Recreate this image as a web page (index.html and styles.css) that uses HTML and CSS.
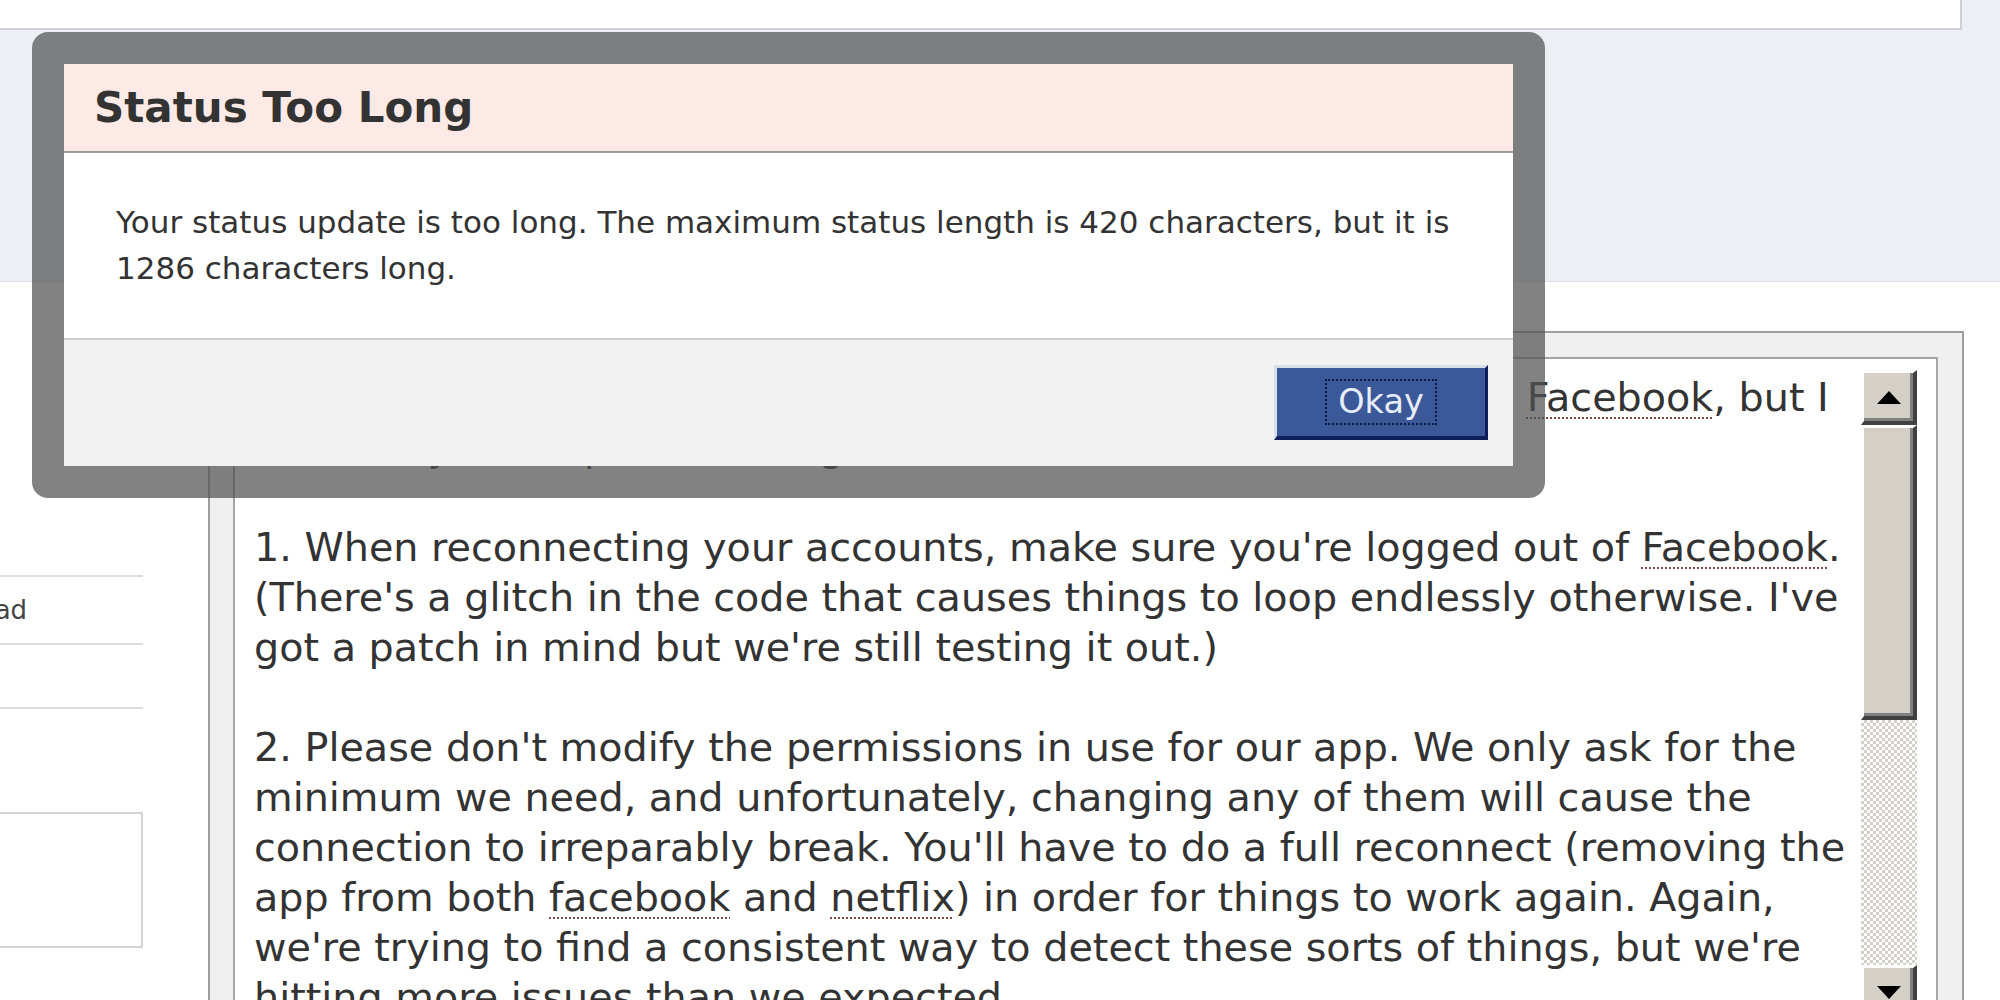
FILE: index.html
```html
<!DOCTYPE html>
<html lang="en">
<head>
    <meta charset="UTF-8">
    <title>Status Too Long</title>
    <link rel="stylesheet" href="styles.css">
</head>
<body>
    <div class="top">
        <div class="topbox"></div>
    </div>

    <div class="content">
        <div class="sidebar">
            <div class="side-item first"><span class="side-text">Upload</span></div>
            <div class="side-item second"></div>
            <div class="side-box"></div>
        </div>

        <div class="composer">
            <div class="textbox">
                <div class="text">
                    Hey, thanks a lot for using the Netflix app! We all really do love <u>Facebook</u>, but I<br>
                    ask that you keep a few things in mind while we work on it:<br>
                    <br>
                    1. When reconnecting your accounts, make sure you're logged out of <u>Facebook</u>.<br>
                    (There's a glitch in the code that causes things to loop endlessly otherwise. I've<br>
                    got a patch in mind but we're still testing it out.)<br>
                    <br>
                    2. Please don't modify the permissions in use for our app. We only ask for the<br>
                    minimum we need, and unfortunately, changing any of them will cause the<br>
                    connection to irreparably break. You'll have to do a full reconnect (removing the<br>
                    app from both <u>facebook</u> and <u>netflix</u>) in order for things to work again. Again,<br>
                    we're trying to find a consistent way to detect these sorts of things, but we're<br>
                    hitting more issues than we expected.
                </div>
                <div class="scrollbar">
                    <div class="sb-btn"><span class="arrow-up"></span></div>
                    <div class="sb-thumb"></div>
                    <div class="sb-track"></div>
                    <div class="sb-btn"><span class="arrow-down"></span></div>
                </div>
            </div>
        </div>
    </div>

    <!-- error dialog over the page -->
    <div class="dialog">
        <div class="dialog-box">
            <div class="dialog-title">Status Too Long</div>
            <div class="dialog-body">
                Your status update is too long. The maximum status length is 420 characters, but it is<br>
                1286 characters long.
            </div>
            <div class="dialog-footer">
                <button class="btn"><span>Okay</span></button>
            </div>
        </div>
    </div>
</body>
</html>
```

FILE: styles.css
```css
body {
    margin: 0;
    background-color: #fff;
    font-family: "DejaVu Sans", Tahoma, sans-serif;
    color: #333;
    overflow: hidden;
}
.top {
    height: 281px;
    background-color: #edeff4;
    border-bottom: 1px solid #dfe2ea;
}
.topbox {
    width: 1960px;
    height: 28px;
    background-color: #fff;
    border-right: 2px solid #cdd0d6;
    border-bottom: 2px solid #cdd0d6;
}
.content {
    display: flex;
    align-items: flex-start;
}
.sidebar {
    width: 143px;
    flex: none;
    padding-top: 293px;
}
.side-item {
    border-top: 2px solid #dcdcdc;
    font-size: 26px;
    white-space: nowrap;
}
.side-item.first {
    height: 66px;
    line-height: 66px;
}
.side-item.second {
    height: 62px;
    border-bottom: 2px solid #dcdcdc;
}
.side-text {
    display: inline-block;
    margin-left: -64px;
    color: #444;
}
.side-box {
    margin-top: 103px;
    height: 132px;
    border: 2px solid #d4d4d4;
    border-left: none;
}
.composer {
    margin-left: 65px;
    margin-top: 49px;
    width: 1705px;
    padding: 24px 24px 0 23px;
    border: 2px solid #9e9e9e;
    border-bottom: none;
    background-color: #f0f0f0;
}
.textbox {
    display: flex;
    height: 700px;
    padding: 11px 19px 0 19px;
    border: 2px solid #a5a5a5;
    background-color: #fff;
    box-sizing: border-box;
}
.text {
    width: 1607px;
    flex: none;
    padding-top: 2px;
    font-size: 39.7px;
    line-height: 50px;
    white-space: nowrap;
    color: #333;
}
.text u {
    text-decoration: underline dotted #7a4a4a;
    text-decoration-thickness: 2px;
    text-underline-offset: 6px;
}
.scrollbar {
    width: 56px;
    flex: none;
    display: flex;
    flex-direction: column;
}
.sb-btn, .sb-thumb {
    box-sizing: border-box;
    background-color: #d4d0c8;
    border-style: solid;
    border-width: 3px 4px 4px 3px;
    border-color: #fff #404040 #404040 #fff;
    box-shadow: inset -3px -3px #808080;
}
.sb-btn {
    height: 55px;
    display: flex;
    align-items: center;
    justify-content: center;
}
.sb-thumb {
    height: 295px;
}
.sb-track {
    height: 245px;
    background: repeating-conic-gradient(#d4d0c8 0 25%, #fff 0 50%) 0 0 / 6px 6px;
}
.arrow-up {
    border-left: 12px solid transparent;
    border-right: 12px solid transparent;
    border-bottom: 13px solid #000;
}
.arrow-down {
    border-left: 12px solid transparent;
    border-right: 12px solid transparent;
    border-top: 13px solid #000;
}
.dialog {
    position: absolute;
    left: 32px;
    top: 32px;
    padding: 32px;
    border-radius: 16px;
    background-color: rgba(82, 82, 82, 0.72);
}
.dialog-box {
    width: 1449px;
    height: 402px;
    display: flex;
    flex-direction: column;
    background-color: #fff;
}
.dialog-title {
    height: 87px;
    line-height: 87px;
    padding-left: 30px;
    background-color: #fdeae6;
    border-bottom: 2px solid #9c9c9c;
    font-size: 42px;
    font-weight: bold;
    color: #333;
    flex: none;
}
.dialog-body {
    height: 185px;
    box-sizing: border-box;
    padding: 46px 0 0 52px;
    font-size: 31px;
    line-height: 46px;
    flex: none;
}
.dialog-footer {
    flex: 1;
    display: flex;
    justify-content: flex-end;
    align-items: flex-start;
    padding: 25px 25px 0 0;
    background-color: #f2f2f2;
    border-top: 2px solid #cfcfcf;
}
.btn {
    width: 214px;
    height: 75px;
    box-sizing: border-box;
    display: flex;
    align-items: center;
    justify-content: center;
    padding: 0;
    background-color: #3b5998;
    border-style: solid;
    border-width: 3px 3px 4px 3px;
    border-color: #d8dfea #0e1f5b #0e1f5b #d8dfea;
    font-family: "DejaVu Sans", Tahoma, sans-serif;
    font-size: 33.5px;
    color: #e6ecf8;
}
.btn span {
    padding: 0 11px;
    line-height: 42px;
    border: 2px dotted #0b1a48;
}
```
